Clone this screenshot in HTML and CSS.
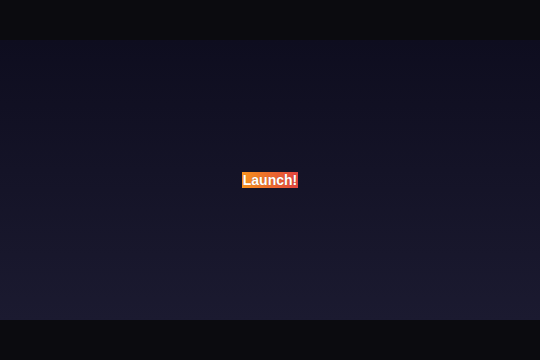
FILE: index.html
```html
<!DOCTYPE html>
<html>
<head>
<meta charset="utf-8">
<link rel="stylesheet" href="styles.css">
</head>
<body>
<div class="page">
  <div class="bar"></div>
  <main class="stage">
    <span class="badge">Launch!</span>
  </main>
  <div class="bar"></div>
</div>
</body>
</html>
```
FILE: styles.css
```css
html, body { margin: 0; padding: 0; }
body { background: #0b0b0f; font-family: "Liberation Sans", Arial, sans-serif; }
.page { width: 540px; height: 360px; display: flex; flex-direction: column; }
.bar { height: 40px; background: #0b0b0f; }
.stage {
  flex: 1;
  background: linear-gradient(to bottom, #0e0d1f, #1b1a30);
  display: flex;
  align-items: center;
  justify-content: center;
}
.badge {
  display: inline-block;
  height: 16px;
  line-height: 16px;
  padding: 0 1px;
  font-size: 14px;
  font-weight: bold;
  color: #fff;
  background: linear-gradient(to right, #f7931e, #e0443e);
  margin-left: 0;
  text-shadow: 0 0 1px rgba(0,0,0,0.3);
}
```
